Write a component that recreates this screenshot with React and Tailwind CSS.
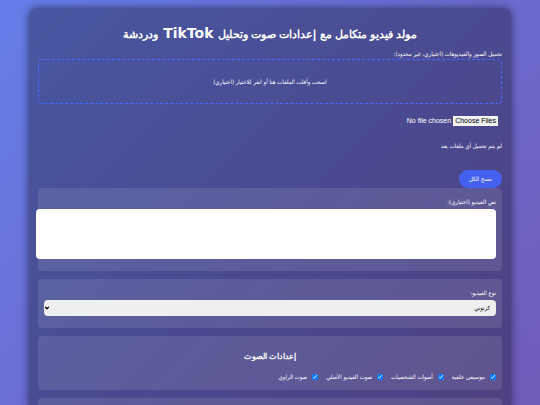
import React, { useState } from "react";
import { ChevronDown } from "lucide-react";

const audioOptions = [
    { id: "music", label: "موسيقى خلفية" },
    { id: "characters", label: "أصوات الشخصيات" },
    { id: "original", label: "صوت الفيديو الأصلي" },
    { id: "narrator", label: "صوت الراوي" },
];

function Section({ children }) {
    return <section className="mb-2 rounded bg-white/10 px-[6px] pt-[9px] pb-2">{children}</section>;
}

export default function App() {
    const [audio, setAudio] = useState({ music: true, characters: true, original: true, narrator: true });
    const [files, setFiles] = useState([]);
    const [text, setText] = useState("");

    const toggleAudio = (id) => {
        setAudio((prev) => ({ ...prev, [id]: !prev[id] }));
    };

    return (
        <div
            dir="rtl"
            className="h-screen overflow-hidden bg-linear-[135deg,#667eea,#764ba2] bg-[size:100%_830px] px-[29px] pt-2 font-['DejaVu_Sans_Condensed','DejaVu_Sans',sans-serif] text-[6px] leading-[10px] text-white"
        >
            <main className="min-h-full rounded-lg bg-black/30 px-[9px] pt-[17px] shadow-[0_0_10px_rgba(0,0,0,0.5)]">
                <h1 className="mb-[6px] text-center font-['Liberation_Sans',sans-serif] text-[11px] leading-[18px] font-bold">
                    مولد فيديو متكامل مع إعدادات صوت وتحليل
                    <span className="font-['DejaVu_Sans',sans-serif] text-[14px] leading-none"> TikTok </span>
                    ودردشة
                </h1>

                {/* Upload area */}
                <label htmlFor="media" className="block">
                    تحميل الصور والفيديوهات (اختياري، غير محدود):
                </label>
                <div className="flex h-[45px] items-center justify-center rounded border border-dashed border-[#4868ff]">
                    <p>اسحب وأفلت الملفات هنا أو انقر للاختيار (اختياري)</p>
                </div>
                <input
                    id="media"
                    type="file"
                    multiple
                    onChange={(e) => setFiles([...e.target.files])}
                    className="mt-3 block w-full px-1 font-['Liberation_Sans',sans-serif] text-[7px] leading-[10px] file:me-[2px] file:border file:border-[#f8f8f8] file:bg-[#efefef] file:px-px file:leading-[8px] file:text-black"
                />
                <p className="mt-[15px]">{files.length > 0 ? files.length : "لم يتم تحميل أي ملفات بعد"}</p>
                <button
                    type="button"
                    onClick={() => setFiles([])}
                    className="mt-[19px] block rounded-full bg-[#4361ee] px-[10px] py-1 text-[6px] leading-[10px]"
                >
                    مسح الكل
                </button>

                <Section>
                    <label htmlFor="script" className="block">نص الفيديو (اختياري):</label>
                    <textarea
                        id="script"
                        value={text}
                        onChange={(e) => setText(e.target.value)}
                        className="mt-[2px] mb-1 box-content block h-[42px] w-full resize-none rounded bg-white p-1 text-black"
                    />
                </Section>

                <Section>
                    <label htmlFor="kind" className="block">نوع الفيديو:</label>
                    <div className="relative mt-[2px] mb-1">
                        <select
                            id="kind"
                            className="block h-4 w-full appearance-none rounded bg-[#efefef] px-[6px] text-[6px] text-black"
                        >
                            <option>كرتوني</option>
                        </select>
                        <ChevronDown
                            strokeWidth={5}
                            className="pointer-events-none absolute top-[5px] left-0 size-[6px] text-black"
                        />
                    </div>
                </Section>

                {/* Audio settings */}
                <Section>
                    <h2 className="mt-[5px] mb-2 text-center font-['Liberation_Sans',sans-serif] text-[8px] leading-[14px] font-bold">
                        إعدادات الصوت
                    </h2>
                    <div className="flex gap-2">
                        {audioOptions.map((option) => (
                            <label key={option.id} className="flex items-center gap-[5px]">
                                <input
                                    type="checkbox"
                                    checked={audio[option.id]}
                                    onChange={() => toggleAudio(option.id)}
                                    className="size-[6px]"
                                />
                                {option.label}
                            </label>
                        ))}
                    </div>
                </Section>

                <Section />
            </main>
        </div>
    );
}
